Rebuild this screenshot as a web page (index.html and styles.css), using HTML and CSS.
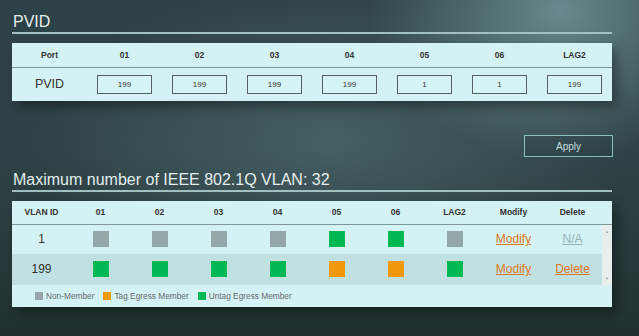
FILE: index.html
```html
<html>

<head>
    <meta charset="UTF-8">
    <meta name="viewport" content="width=device-width,initial-scale=1">
    <link rel="stylesheet" href="styles.css">
</head>

<body>
    <div class="page">
        <h2 class="title">PVID</h2>
        <div class="panel">
            <table class="grid pvid">
                <thead>
                    <tr>
                        <th>Port</th><th>01</th><th>02</th><th>03</th><th>04</th><th>05</th><th>06</th><th>LAG2</th>
                    </tr>
                </thead>
                <tbody>
                    <tr>
                        <td class="label">PVID</td>
                        <td><input class="pv" value="199"></td>
                        <td><input class="pv" value="199"></td>
                        <td><input class="pv" value="199"></td>
                        <td><input class="pv" value="199"></td>
                        <td><input class="pv" value="1"></td>
                        <td><input class="pv" value="1"></td>
                        <td><input class="pv" value="199"></td>
                    </tr>
                </tbody>
            </table>
        </div>

        <div class="actions">
            <button class="apply">Apply</button>
        </div>

        <h2 class="title title2">Maximum number of IEEE 802.1Q VLAN: 32</h2>
        <div class="panel">
            <table class="grid vlan">
                <thead>
                    <tr>
                        <th>VLAN ID</th><th>01</th><th>02</th><th>03</th><th>04</th><th>05</th><th>06</th><th>LAG2</th><th>Modify</th><th>Delete</th><th class="sb-head"></th>
                    </tr>
                </thead>
                <tbody>
                    <tr>
                        <td class="vid">1</td>
                        <td><span class="sq non"></span></td>
                        <td><span class="sq non"></span></td>
                        <td><span class="sq non"></span></td>
                        <td><span class="sq non"></span></td>
                        <td><span class="sq untag"></span></td>
                        <td><span class="sq untag"></span></td>
                        <td><span class="sq non"></span></td>
                        <td><a class="link" href="#">Modify</a></td>
                        <td><a class="link off" href="#">N/A</a></td>
                        <td class="scroll" rowspan="2">
                            <div class="sbar"><span class="arr">&#9650;</span><span class="arr">&#9660;</span></div>
                        </td>
                    </tr>
                    <tr class="alt">
                        <td class="vid">199</td>
                        <td><span class="sq untag"></span></td>
                        <td><span class="sq untag"></span></td>
                        <td><span class="sq untag"></span></td>
                        <td><span class="sq untag"></span></td>
                        <td><span class="sq tag"></span></td>
                        <td><span class="sq tag"></span></td>
                        <td><span class="sq untag"></span></td>
                        <td><a class="link" href="#">Modify</a></td>
                        <td><a class="link" href="#">Delete</a></td>
                    </tr>
                    <tr class="legend-row">
                        <td colspan="11">
                            <div class="legend">
                                <span class="key"><span class="dot non"></span>Non-Member</span>
                                <span class="key"><span class="dot tag"></span>Tag Egress Member</span>
                                <span class="key"><span class="dot untag"></span>Untag Egress Member</span>
                            </div>
                        </td>
                    </tr>
                </tbody>
            </table>
        </div>
    </div>
</body>

</html>
```

FILE: styles.css
```css
* {
    margin: 0;
    padding: 0;
    box-sizing: border-box;
    font-family: "Liberation Sans", Arial, sans-serif;
}

html,
body {
    width: 639px;
    height: 336px;
    overflow: hidden;
}

body {
    background:
        radial-gradient(ellipse 190px 150px at 560px 10px, rgba(115, 150, 152, .85) 0, rgba(115, 150, 152, 0) 100%),
        radial-gradient(ellipse 300px 160px at 330px 140px, rgba(88, 118, 121, .55), rgba(88, 118, 121, 0)),
        linear-gradient(180deg, #2d4246 0%, #2e4347 45%, #263839 80%, #213131 100%);
}

.page {
    width: 600px;
    margin-left: 12px;
    padding-top: 13px;
}

.title {
    font-size: 16px;
    font-weight: normal;
    line-height: 18px;
    color: rgb(228, 238, 238);
    padding: 0 1px 1px;
    border-bottom: 2px solid rgb(163, 192, 193);
}

.title2 {
    margin-top: 14px;
}

.panel {
    margin-top: 9px;
    background-color: rgb(212, 241, 243);
    box-shadow: 5px 6px 10px rgba(0, 0, 0, .35);
}

.grid {
    width: 100%;
    border-collapse: collapse;
    table-layout: fixed;
    color: rgb(51, 51, 51);
}

.grid th {
    font-size: 8.5px;
    font-weight: bold;
    height: 23px;
    text-align: center;
    border-bottom: 1px solid rgb(128, 152, 155);
}

.grid td {
    text-align: center;
    vertical-align: middle;
}

.pvid th {
    width: 75px;
    height: 24px;
}

.pvid td {
    height: 34px;
}

.pvid .label {
    font-size: 12.5px;
}

.pv {
    width: 55px;
    height: 19px;
    border: 1px solid rgb(88, 96, 98);
    background-color: rgb(214, 243, 245);
    text-align: center;
    font-size: 8px;
    color: rgb(51, 51, 51);
    outline: none;
}

.actions {
    margin-top: 34px;
    display: flex;
    justify-content: flex-end;
}

.apply {
    width: 89px;
    height: 22px;
    margin-right: -1px;
    background-color: rgba(20, 40, 44, .15);
    border: 1px solid rgb(140, 190, 192);
    color: rgb(196, 222, 222);
    font-size: 10px;
    cursor: pointer;
}

.vlan th {
    width: 59px;
}

.vlan th.sb-head {
    width: 10px;
}

.vlan td {
    height: 30px;
}

.vlan .vid {
    font-size: 12px;
}

.alt td {
    background-color: rgb(192, 224, 226);
}

.alt td.scroll {
    background-color: transparent;
}

.sq {
    display: inline-block;
    width: 16px;
    height: 16px;
    vertical-align: middle;
}

.non {
    background-color: rgb(149, 166, 168);
}

.untag {
    background-color: rgb(0, 184, 84);
}

.tag {
    background-color: rgb(238, 152, 10);
}

.link {
    font-size: 12px;
    color: rgb(222, 120, 36);
    text-decoration: underline;
}

.link.off {
    color: rgb(150, 178, 180);
}

.scroll {
    padding: 0;
}

.sbar {
    height: 60px;
    width: 10px;
    background-color: rgb(232, 238, 238);
    display: flex;
    flex-direction: column;
    justify-content: space-between;
    align-items: center;
    padding: 4px 0;
}

.arr {
    font-size: 4px;
    line-height: 5px;
    color: rgb(150, 160, 160);
}

.vlan .legend-row td {
    height: 22px;
}

.legend {
    display: flex;
    align-items: center;
    gap: 9px;
    padding-left: 23px;
    font-size: 8.3px;
    color: rgb(100, 108, 110);
}

.key {
    display: flex;
    align-items: center;
    gap: 3px;
}

.dot {
    display: inline-block;
    width: 8px;
    height: 8px;
}
```
